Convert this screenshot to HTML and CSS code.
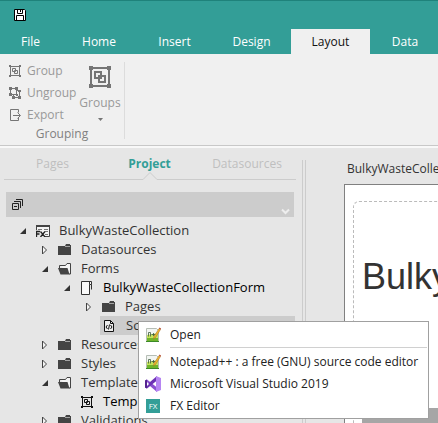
FILE: index.html
```html
<!DOCTYPE html>
<html lang="en">
<head>
<meta charset="utf-8">
<title>BulkyWasteCollection</title>
<link rel="stylesheet" href="styles.css">
</head>
<body>
<svg class="defs" aria-hidden="true">
  <symbol id="group" viewBox="0 0 12 12"><path d="M1.5 1.5h9v9h-9zM3.5 3.5h3v3h-3zM5.5 5.5h3v3h-3z" fill="none" stroke="currentColor"/><path d="M0 0h2v2H0zM10 0h2v2h-2zM0 10h2v2H0zM10 10h2v2h-2z" fill="currentColor"/></symbol>
  <symbol id="folder" viewBox="0 0 14 12"><path d="M0 2h7l1-2h4v1h1v10H0z" fill="currentColor"/><path d="M7 2.5h5" stroke="#e6e6e6" stroke-width=".6"/></symbol>
  <symbol id="folder-open" viewBox="0 0 14 12"><path d="M2.500 2.500h5l1.500-2h3.500v10.500H10z" fill="#f4f4f4"/><path d="M1.500 5V2.500h6l1.500-2h3.500v10.500H11" fill="none" stroke="currentColor"/><path d="M0 5h9.500l2 6.500H2.500z" fill="currentColor"/></symbol>
  <symbol id="closed" viewBox="0 0 8 10"><path d="M.5 1v8l4-4z" fill="#f4f4f4" stroke="#444"/></symbol>
  <symbol id="opened" viewBox="0 0 8 10"><path d="M6 2v6H0z" fill="#333"/></symbol>
  <symbol id="notepad" viewBox="0 0 16 16"><path d="M1.500 1.500h10l2 2v11h-12z" fill="#f2f5f2" stroke="#b5bdb5"/><path d="M2 8l11-2v8H2z" fill="#c4e35c"/><path d="M2 11h11v3H2z" fill="#6fb52a"/><path d="M1 14.500h13" stroke="#3c8a28"/><path d="M3.500 9.500v-4h2v4M6.500 7.500h4M8.500 6v3" stroke="#3c5a3c" fill="none" stroke-width=".8"/><path d="M8.500 12l.5-2.500 5-8 1.500 1-5 8z" fill="#f3b62e" stroke="#9b6b24" stroke-width=".5"/><path d="M14 1.500l1.500 1 .5-1-1.500-1z" fill="#b43a2a"/></symbol>
</svg>
<div class="app">
  <header class="titlebar">
    <button class="save" aria-label="Save"><svg width="12" height="12" viewBox="0 0 12 12"><path d="M.5.5h10l1 1v10H.5z" fill="#fff" stroke="#000"/><path d="M3.500 1v3.500h5V1M2.500 11V6.500h7V11" fill="#fff" stroke="#000"/><path d="M6 1h1v2H6z"/></svg></button>
  </header>
  <nav class="tabs">
    <button>File</button><button>Home</button><button>Insert</button><button>Design</button><button class="active">Layout</button><button>Data</button>
  </nav>
  <section class="ribbon">
    <div class="ribbon-group">
      <div class="commands">
        <div class="small-commands">
          <button><svg width="12" height="12"><use href="#group"/></svg>Group</button>
          <button><svg width="12" height="12" viewBox="0 0 12 12"><path d="M1.500 1.500h6v6h-6zM8 3.500h2.500v7h-6V8" fill="none" stroke="currentColor"/><path d="M0 0h3v3H0zM6 0h3v3H6zM0 6h3v3H0zM9 3h3v2H9zM7 7h2v2H7zM9 9h3v3H9zM3 9h3v3H3z" fill="currentColor"/></svg>Ungroup</button>
          <button><svg width="12" height="12" viewBox="0 0 12 12"><path d="M9.500 3.500v-3h-8v11h8v-3M4 6.500h7M8.500 3.500l3 3-3 3" fill="none" stroke="currentColor"/></svg>Export</button>
        </div>
        <button class="big"><svg width="22" height="22" viewBox="0 0 22 22"><path d="M2 2h18v18H2zM6 6h6v6H6zM10 10h6v6h-6z" fill="none" stroke="currentColor" stroke-width="2"/><path d="M0 0h4v4H0zM18 0h4v4h-4zM0 18h4v4H0zM18 18h4v4h-4z" fill="currentColor"/></svg><span>Groups</span><svg width="5" height="3" viewBox="0 0 5 3"><path d="M0 0h5L2.500 3z" fill="currentColor"/></svg></button>
      </div>
      <div class="group-name">Grouping</div>
    </div>
  </section>
  <main class="workspace">
    <aside class="panel">
      <div class="panel-tabs"><button>Pages</button><button class="current">Project<svg class="notch" width="16" height="9" viewBox="0 0 16 9"><path d="M0 9V8.500h1L8 1l7 7.500h1V9z" fill="#e6e6e6"/><path d="M0 8.500h1l7-7 7 7h1" fill="none" stroke="#ccc"/></svg></button><button>Datasources</button></div>
      <div class="toolbar">
        <button aria-label="Collapse all"><svg width="11" height="11" viewBox="0 0 11 11"><path d="M.5 4.500h6v6h-6zM2 7.500h3M2 2.500h6.500V9M4 .5h6.500V7" fill="none" stroke="#222"/></svg></button>
        <button class="more" aria-label="More"><svg width="9" height="7" viewBox="0 0 9 7"><path d="M1 1.500l3.500 3.500L8 1.500" fill="none" stroke="#eee" stroke-width="2"/></svg></button>
      </div>
      <ul class="tree">
        <li><svg class="arrow"><use href="#opened"/></svg><svg class="icon" viewBox="0 0 14 12"><path d="M.5 5V.5h13v11H9" fill="#f4f4f4" stroke="#444"/><path d="M0 0h14v2H0z" fill="#444"/><path d="M2 4.500h4M8 4.500h4M9 6.500h3M9 9.500h3" stroke="#777"/><path d="M.5 12V6.500H4M1 9h2.500M4.500 6.500L9 12M9 6.500L4.500 12" fill="none" stroke="#222" stroke-width="1.300"/></svg>BulkyWasteCollection</li>
        <li class="l1"><svg class="arrow"><use href="#closed"/></svg><svg class="icon"><use href="#folder"/></svg>Datasources</li>
        <li class="l1"><svg class="arrow"><use href="#opened"/></svg><svg class="icon"><use href="#folder-open"/></svg>Forms</li>
        <li class="l2 strong"><svg class="arrow"><use href="#opened"/></svg><svg class="icon tall" viewBox="0 0 14 14"><path d="M1.500.5h10v3h-2v10h-8z" fill="#fafafa" stroke="#333"/><path d="M9.500 1v2.500M11.500 3.500v5" fill="none" stroke="#333"/></svg>BulkyWasteCollectionForm</li>
        <li class="l3"><svg class="arrow"><use href="#closed"/></svg><svg class="icon"><use href="#folder"/></svg>Pages</li>
        <li class="l3 selected"><span><svg class="icon" viewBox="0 0 14 12"><path d="M1.500.5h6l3 3v8h-9z" fill="#eee" stroke="#111"/><path d="M7.500.5v3h3M4.500 5L3 7l1.500 2M7.500 5L9 7 7.500 9M6.500 4.500l-1 5" fill="none" stroke="#111"/></svg>Scripts</span></li>
        <li class="l1"><svg class="arrow"><use href="#closed"/></svg><svg class="icon"><use href="#folder"/></svg>Resources</li>
        <li class="l1"><svg class="arrow"><use href="#closed"/></svg><svg class="icon"><use href="#folder"/></svg>Styles</li>
        <li class="l1"><svg class="arrow"><use href="#opened"/></svg><svg class="icon"><use href="#folder-open"/></svg>Templates</li>
        <li class="l2 strong"><span class="arrow"></span><svg class="icon"><use href="#group"/></svg>Template</li>
        <li class="l1"><svg class="arrow"><use href="#closed"/></svg><svg class="icon"><use href="#folder"/></svg>Validations</li>
      </ul>
    </aside>
    <div class="splitter"></div>
    <section class="editor">
      <div class="doc-name">BulkyWasteCollectionForm</div>
      <div class="canvas"><div class="page"><h1>BulkyWaste</h1><div class="block"></div></div></div>
    </section>
  </main>
  <div class="menu" role="menu">
    <button role="menuitem"><svg width="16" height="16"><use href="#notepad"/></svg>Open</button>
    <hr>
    <button role="menuitem"><svg width="16" height="16"><use href="#notepad"/></svg>Notepad++ : a free (GNU) source code editor</button>
    <button role="menuitem"><svg width="16" height="16" viewBox="0 0 16 16"><path d="M0 4.500L2 3.500 12 11.500V16L1.500 7z" fill="#8a4fd0"/><path d="M0 11.500l2 1L12 4.500V0L1.500 9z" fill="#6c32b4"/><path d="M0 4.500l2-1v9l-2-1z" fill="#54238f"/><path d="M2 6v4l2-2z" fill="#fff"/><path d="M11 0l5 2v12l-5 2v-4.500V4.500z" fill="#b685f2"/></svg>Microsoft Visual Studio 2019</button>
    <button role="menuitem"><span class="fx">FX</span>FX Editor</button>
  </div>
</div>
</body>
</html>
```
FILE: styles.css
```css
* { box-sizing: border-box; }
body { margin: 0; font: 12px/16px "Open Sans", "Noto Sans", sans-serif; color: #333; overflow: hidden; }
button { font: inherit; color: inherit; background: none; border: 0; padding: 0; margin: 0; white-space: nowrap; }
svg { display: block; flex: none; }
.defs { position: absolute; width: 0; height: 0; }
.app { position: relative; display: flex; flex-direction: column; height: 100vh; background: #e6e6e6; }
.titlebar { height: 29px; flex: none; background: #339e97; border-top: 1px solid #1f827b; padding: 8px 14px; }
.tabs { display: grid; grid-template-columns: 61px 76px 75px 79px 79px 70px; flex: none; height: 25px; background: #339e97; color: #fff; }
.tabs .active { background: #f0f0f0; color: #111; }
.ribbon { flex: none; height: 94px; background: #f0f0f0; border-bottom: 2px solid #f8f8f8; box-shadow: inset 0 -1px #c8c8c8; padding: 8px 0 7px; }
.ribbon-group { width: 125px; height: 77px; border-right: 1px solid #dcdcdc; color: #999; }
.commands { display: flex; gap: 6px; height: 64px; padding-left: 9px; }
.small-commands { width: 66px; flex: none; }
.small-commands button { display: flex; align-items: center; gap: 6px; height: 22px; padding-bottom: 4px; }
.commands svg { color: #757575; }
.big { display: flex; flex-direction: column; align-items: center; padding-top: 4px; width: 38px; }
.big span { margin: 7px 0; }
.group-name { color: #808080; text-align: center; }
.workspace { display: flex; flex: 1; min-height: 0; overflow: hidden; }
.panel { width: 300px; flex: none; }
.panel-tabs { display: grid; grid-template-columns: 97px 97px 98px; margin: 0 4px; height: 32px; border-bottom: 1px solid #ccc; color: #bfbfbf; }
.panel-tabs button { position: relative; height: 31px; }
.panel-tabs .current { color: #339e97; font-weight: bold; }
.notch { position: absolute; bottom: -1px; left: 41px; }
.toolbar { display: flex; justify-content: space-between; align-items: center; height: 25px; margin: 12px 6px 0; padding: 0 4px 0 6px; background: #ccc; }
.more { align-self: flex-end; padding-bottom: 2px; }
.tree { list-style: none; margin: 4px 5px 0 0; padding: 0; font-size: 13px; line-height: 19px; }
.tree li, .selected span { display: flex; align-items: center; height: 19px; white-space: nowrap; }
.tree li { padding-left: 20px; }
.tree .l1 { padding-left: 42px; }
.tree .l2 { padding-left: 64px; }
.tree .l3 { padding-left: 86px; }
.tree .strong { color: #000; }
.tree .selected { padding-left: 100px; }
.selected span { flex: 1; background: #ccc; padding-left: 3px; }
.arrow { width: 8px; height: 10px; margin-right: 8px; flex: none; }
.icon { width: 14px; height: 12px; margin-right: 9px; color: #444; }
.tall { height: 14px; }
.strong .icon { color: #111; }
.splitter { width: 4px; margin: 12px 0 0 2px; flex: none; border: solid #ccc; border-width: 0 1px; }
.editor { flex: 1; min-width: 0; margin-left: 38px; padding-top: 13px; display: flex; flex-direction: column; overflow: hidden; }
.doc-name { padding-left: 3px; white-space: nowrap; }
.canvas { flex: 1; margin-top: 7px; padding: 16px 0 0 8px; background: #fff; border: solid #808080; border-width: 1px 0 0 1px; overflow: hidden; }
.page { display: flex; flex-direction: column; height: 100%; border: dashed #bbb; border-width: 1px 0 0 1px; border-top-left-radius: 6px; padding: 54px 0 0 8px; }
h1 { margin: 0; font: 36px/42px "Liberation Sans", Arial, sans-serif; white-space: nowrap; }
.block { flex: 1; margin-top: 110px; background: #a6a6a6; }
.menu { position: absolute; left: 138px; top: 321px; width: 291px; padding: 2px 1px 1px; background: #fff; border: 1px solid #a0a0a0; }
.menu button { display: flex; align-items: center; gap: 9px; width: 100%; height: 22px; padding-left: 5px; color: #222; }
.menu hr { margin: 1px 0 3px 30px; border: 0; border-top: 1px solid #d0d0d0; }
.fx { width: 14px; margin: 0 1px; height: 14px; font-size: 8px; line-height: 14px; text-align: center; background: #339e97; color: #fff; }
```
